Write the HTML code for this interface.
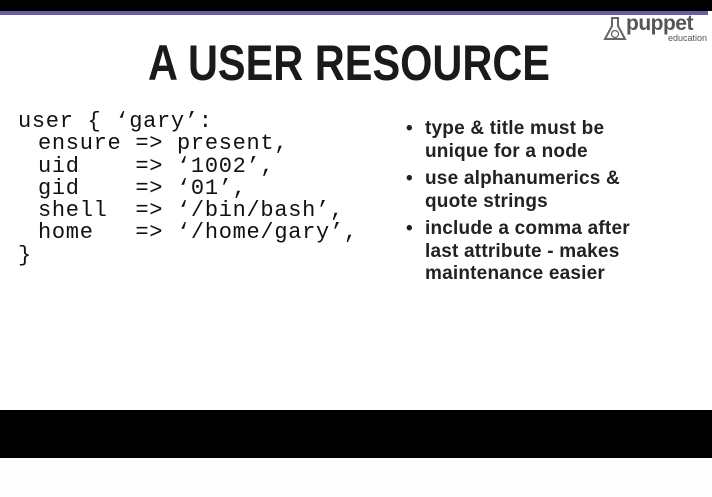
<!DOCTYPE html>
<html><head><meta charset="utf-8"><style>
html,body{margin:0;padding:0}
body{width:712px;height:497px;position:relative;background:#fff;overflow:hidden;font-family:"Liberation Sans",sans-serif;color:#1e1e1e}
.top{position:absolute;left:0;top:0;width:712px;height:11px;background:#000}
.purple{position:absolute;left:0;top:11px;width:708px;height:4px;background:#6b5ca5}
.title{position:absolute;left:0;width:698px;top:34px;text-align:center;font-size:50px;font-weight:bold;color:#1a1a1a;transform:scaleX(0.83);transform-origin:349px 0}
.code{position:absolute;left:18px;top:111px;font-family:"Liberation Mono",monospace;font-size:22px;line-height:22.3px;white-space:pre;color:#111;letter-spacing:0.7px}
.code .i{padding-left:20px}
ul{position:absolute;left:406px;top:118px;margin:0;padding:0;list-style:none;font-size:19px;font-weight:bold;line-height:22.5px;color:#222;letter-spacing:0.2px}
li{position:relative;padding-left:19px;margin-bottom:5px}
li:before{content:"•";position:absolute;left:0;top:0}
.bar{position:absolute;left:0;top:410px;width:712px;height:48px;background:#000}
.bot{position:absolute;left:0;top:458px;width:712px;height:39px;background:#fdfdfd}
.logo{position:absolute;left:603px;top:14px}
</style></head><body>
<div class="top"></div><div class="purple"></div>
<div class="logo">
<svg width="24" height="28" viewBox="0 0 24 28"><path d="M8 4h8M9 4v8L2 25h20L15 12V4" fill="none" stroke="#666" stroke-width="2"/><circle cx="12" cy="20" r="3.5" fill="none" stroke="#666" stroke-width="1.3"/></svg>
<span style="position:absolute;left:23px;top:-2px;font-size:21px;font-weight:bold;color:#555;letter-spacing:-0.5px">puppet</span>
<span style="position:absolute;left:65px;top:19px;font-size:9px;color:#555">education</span>
</div>
<div class="title">A USER RESOURCE</div>
<div class="code">user { ‘gary’:
<span class="i">ensure => present,</span>
<span class="i">uid    => ‘1002’,</span>
<span class="i">gid    => ‘01’,</span>
<span class="i">shell  => ‘/bin/bash’,</span>
<span class="i">home   => ‘/home/gary’,</span>
}</div>
<ul>
<li>type &amp; title must be<br>unique for a node</li>
<li>use alphanumerics &amp;<br>quote strings</li>
<li>include a comma after<br>last attribute - makes<br>maintenance easier</li>
</ul>
<div class="bar"></div><div class="bot"></div>
</body></html>
